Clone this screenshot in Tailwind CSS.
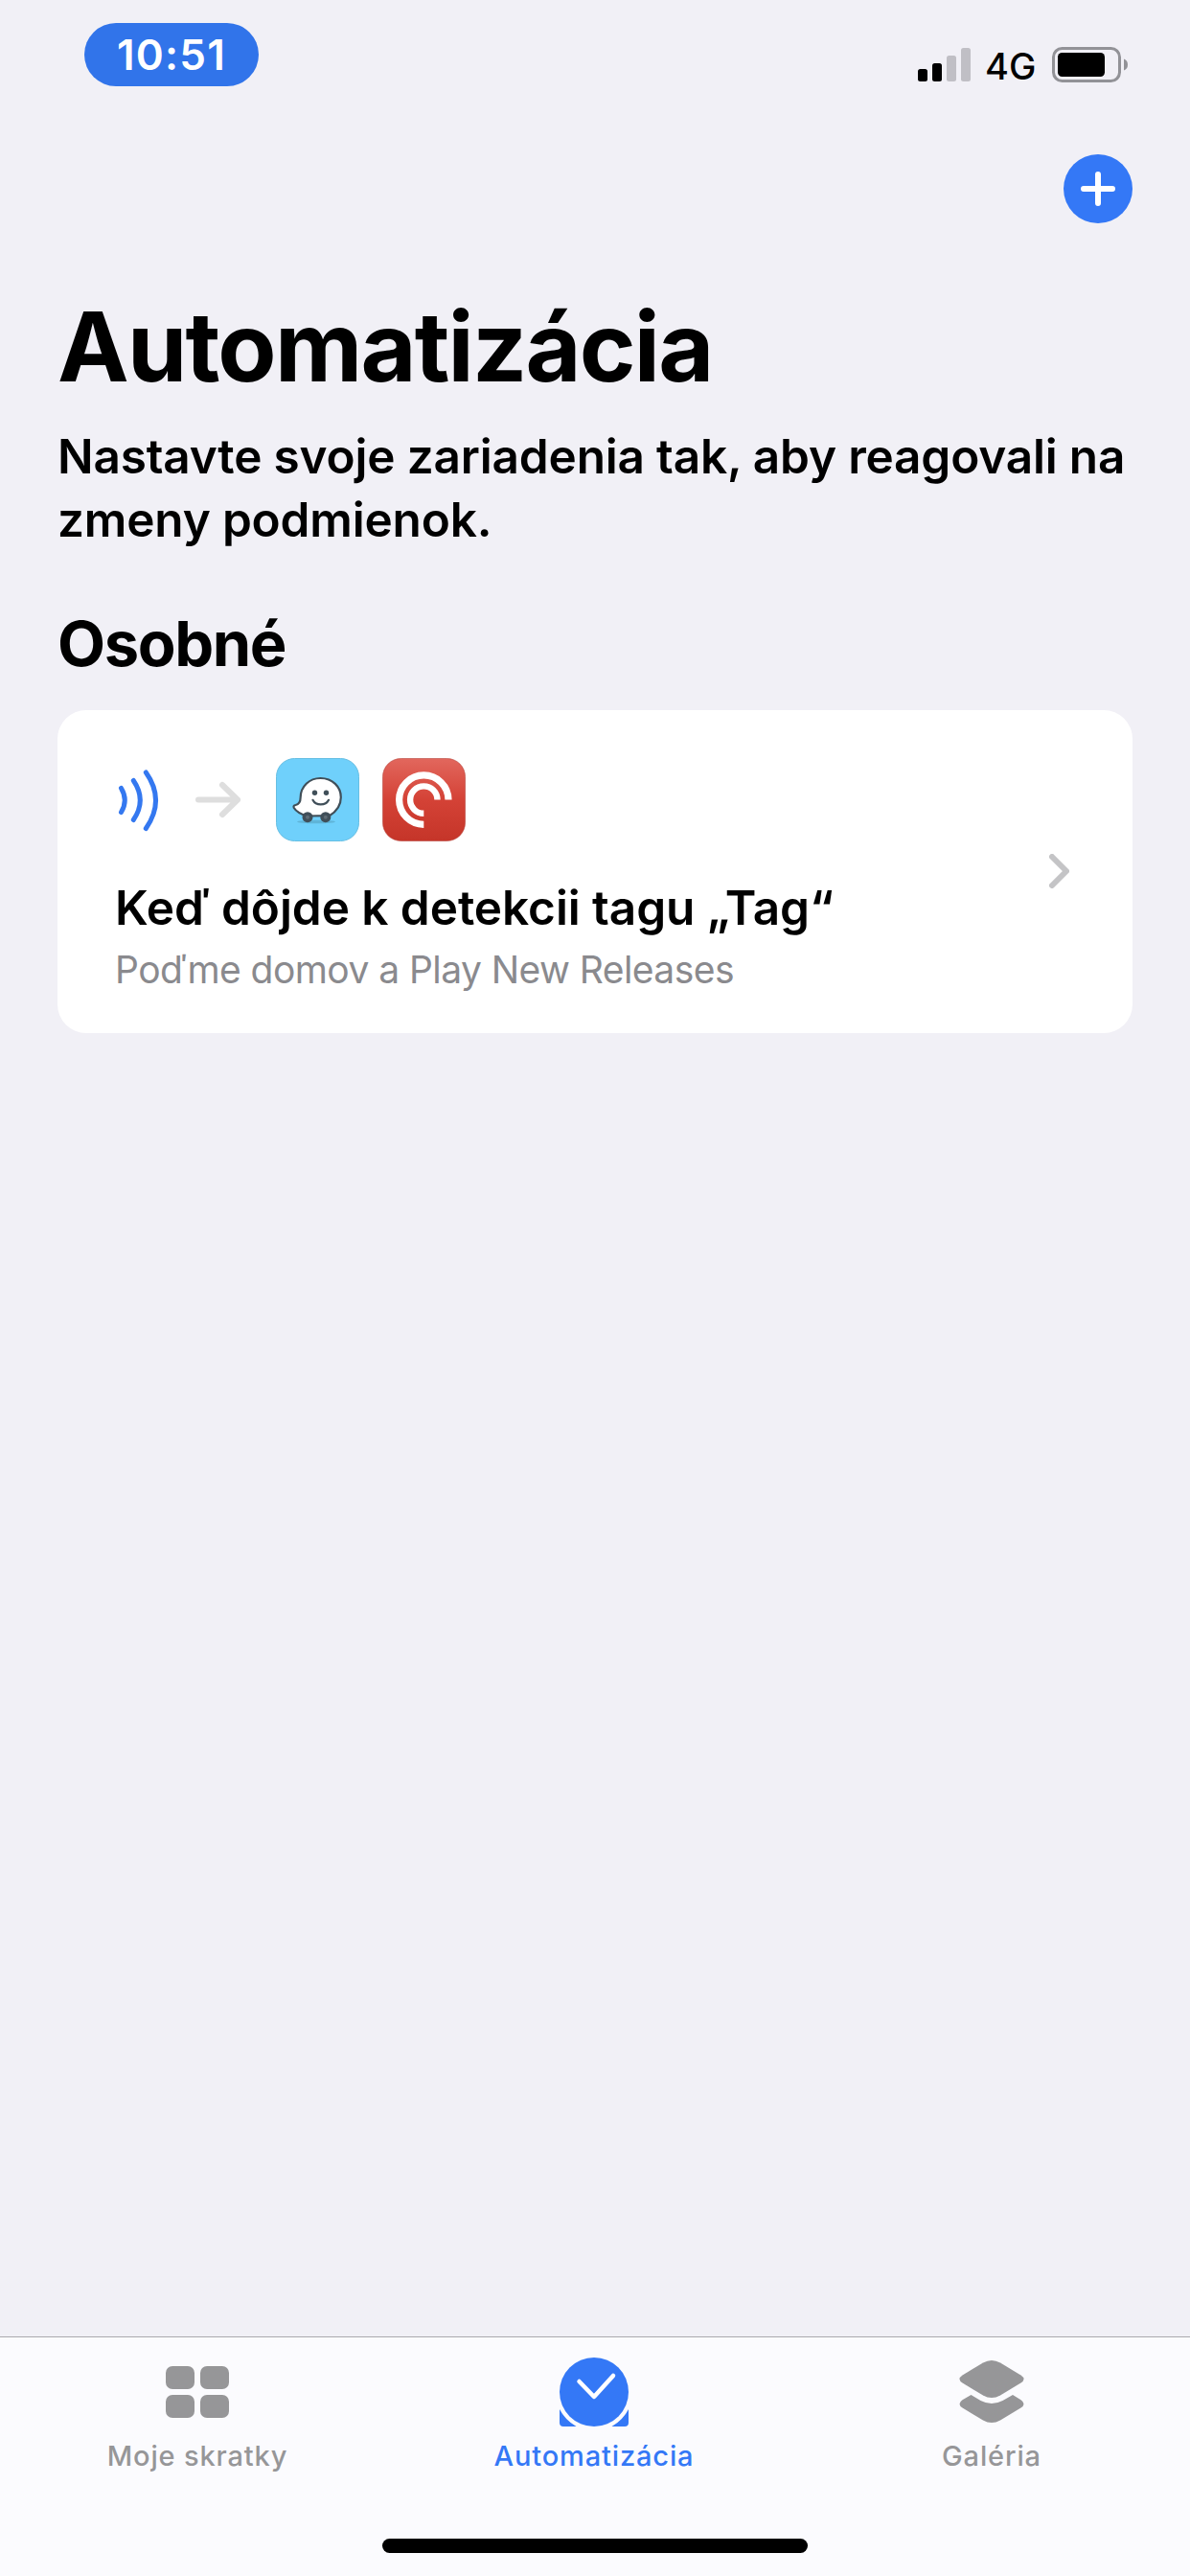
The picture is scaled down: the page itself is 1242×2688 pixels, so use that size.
<!DOCTYPE html>
<html lang="sk">
<head>
    <meta charset="UTF-8">
    <meta name="viewport" content="width=device-width, initial-scale=1.0">
    <title>Automatizácia</title>
    <script src="https://cdn.jsdelivr.net/npm/@tailwindcss/browser@4"></script>
</head>
<body class="bg-[#f1f0f6] text-black font-['Inter','Roboto',sans-serif]">
    <div class="flex flex-col w-[1242px] h-[2688px] overflow-hidden">
        <!-- Status bar -->
        <header class="flex justify-between items-start h-[161px] pl-[88px] pr-[65px] pt-6">
            <div class="flex items-center justify-center w-[182px] h-[66px] rounded-full bg-[#3174ea] text-white text-[44px] font-semibold tracking-[1.2px]">10:51</div>
            <div class="flex items-center h-[38px] mt-[25px]">
                <svg class="w-[55px] h-[38px]" viewBox="0 0 55 38">
                    <rect x="0" y="23" width="10" height="13" rx="2.5" fill="#000"/>
                    <rect x="15" y="17" width="10" height="19" rx="2.5" fill="#000"/>
                    <rect x="30" y="9" width="10" height="27" rx="2.5" fill="#c0bfc5"/>
                    <rect x="45" y="1" width="10" height="35" rx="2.5" fill="#c0bfc5"/>
                </svg>
                <span class="ml-[15px] mt-[2px] w-[52px] text-[38px] leading-[38px] font-medium">4G</span>
                <svg class="ml-[18px] w-[79px] h-[38px]" viewBox="0 0 79 38">
                    <rect x="1.5" y="1.5" width="69" height="34" rx="9" fill="none" stroke="#929297" stroke-width="3"/>
                    <rect x="6" y="6" width="49" height="25" rx="4.5" fill="#000"/>
                    <path d="M75 12.5q4 1.5 4 6t-4 6z" fill="#929297"/>
                </svg>
            </div>
        </header>

        <!-- Content -->
        <main class="flex-1 px-[60px]">
            <div class="flex justify-end">
                <button class="block size-[72px]">
                    <svg class="size-[72px]" viewBox="0 0 72 72">
                        <circle cx="36" cy="36" r="36" fill="#3478f6"/>
                        <path d="M36 21v30M21 36h30" stroke="#fff" stroke-width="6" stroke-linecap="round"/>
                    </svg>
                </button>
            </div>
            <h1 class="mt-[69px] text-[100px] leading-[120px] font-bold tracking-[-1.75px] whitespace-nowrap">Automatizácia</h1>
            <p class="mt-[21px] text-[49.5px] leading-[66px] font-semibold tracking-[-0.17px] whitespace-nowrap">Nastavte svoje zariadenia tak, aby reagovali na<br>zmeny podmienok.</p>
            <h2 class="mt-[57px] text-[65px] leading-[80px] font-bold tracking-[-1.4px]">Osobné</h2>

            <!-- Automation card -->
            <div class="flex items-center justify-between mt-[29px] h-[337px] pl-[60px] pr-[66px] rounded-[30px] bg-white">
                <div class="h-full pt-[50px]">
                    <div class="flex items-center h-[87px]">
                        <svg class="w-[48px] h-[87px]" viewBox="0 0 48 87" fill="none" stroke="#3478f0" stroke-width="5" stroke-linecap="round">
                            <path d="M6.5 31.5q7.5 12.5 0 25"/>
                            <path d="M19.3 23.5q14 20.500 0 41"/>
                            <path d="M32.300 15q20.500 29 0 58.500"/>
                        </svg>
                        <svg class="ml-[34px] w-[52px] h-[87px]" viewBox="0 0 52 87" fill="none" stroke="#dedede" stroke-width="6" stroke-linecap="round" stroke-linejoin="round">
                            <path d="M5 43.500h41M30 28l16 15.500-16 15.500"/>
                        </svg>
                        <!-- Waze -->
                        <svg class="ml-[34px] size-[87px]" viewBox="0 0 87 87">
                            <rect x=".5" y=".5" width="86" height="86" rx="19" fill="#6fd0fb" stroke="#67bfe3"/>
                            <ellipse cx="42" cy="66.500" rx="20" ry="1.800" fill="#5fb4d8"/>
                            <path d="M32 60.500C26 58.500 21 55.500 18.800 52c-.9-1.800.2-2.700 1.700-3C24.500 48 25.600 45 25.600 41.500 25.600 29.500 35 21 46.500 21 59 21 67.800 30 67.800 41c0 8.500-5 15-12 19.200z" fill="#fff" stroke="#404f59" stroke-width="2.200" stroke-linejoin="round"/>
                            <circle cx="33" cy="61.700" r="5.500" fill="#404f59"/>
                            <circle cx="51.800" cy="61.700" r="5.500" fill="#404f59"/>
                            <circle cx="33" cy="61.700" r="2" fill="#5f6c75"/>
                            <circle cx="51.800" cy="61.700" r="2" fill="#5f6c75"/>
                            <circle cx="40.500" cy="36.300" r="2.700" fill="#404f59"/>
                            <circle cx="52.500" cy="36.300" r="2.700" fill="#404f59"/>
                            <path d="M38.500 43.800c3 6.200 13.500 6.200 16.500 0" fill="none" stroke="#404f59" stroke-width="2.200" stroke-linecap="round"/>
                        </svg>
                        <!-- Pocket Casts -->
                        <svg class="ml-[24px] size-[87px]" viewBox="0 0 87 87">
                            <defs>
                                <linearGradient id="pc" x1="0" y1="0" x2="0" y2="1">
                                    <stop offset="0" stop-color="#e2675d"/>
                                    <stop offset=".5" stop-color="#d44236"/>
                                    <stop offset="1" stop-color="#c53529"/>
                                </linearGradient>
                            </defs>
                            <rect x=".5" y=".5" width="86" height="86" rx="19" fill="url(#pc)" stroke="#b8423a" stroke-opacity=".6"/>
                            <path d="M43.300 69.300A25.700 25.700 0 1 1 69 43.600" fill="none" stroke="#fff" stroke-width="7.200"/>
                            <path d="M43.300 57.800A14.200 14.200 0 1 1 57.500 43.600" fill="none" stroke="#fff" stroke-width="6.400"/>
                        </svg>
                    </div>
                    <h3 class="mt-[39px] text-[49.5px] leading-[60px] font-semibold tracking-[-0.05px] whitespace-nowrap">Keď dôjde k detekcii tagu „Tag“</h3>
                    <p class="mt-[11px] text-[39px] leading-[48px] tracking-[-0.56px] text-[#8a8a8e] whitespace-nowrap">Poďme domov a Play New Releases</p>
                </div>
                <svg class="mb-[2px] w-[21px] h-[36px]" viewBox="0 0 21 36" fill="none" stroke="#c4c4c6" stroke-width="6" stroke-linecap="round" stroke-linejoin="round">
                    <path d="M3 3l15 15-15 15"/>
                </svg>
            </div>
        </main>

        <!-- Tab bar -->
        <nav class="h-[250px] border-t border-[#aaaaae] bg-[#fbfbfe] text-[29px] leading-9 font-medium tracking-[0.85px] text-[#969698]">
            <div class="grid grid-cols-3">
                <a class="flex flex-col items-center pt-[21px] pr-[2px]">
                    <svg class="size-[72px]" viewBox="0 0 72 72" fill="#969698">
                        <rect x="3" y="9" width="30" height="24" rx="7"/>
                        <rect x="39" y="9" width="30" height="24" rx="7"/>
                        <rect x="3" y="39" width="30" height="24" rx="7"/>
                        <rect x="39" y="39" width="30" height="24" rx="7"/>
                    </svg>
                    <span class="mt-[13px]">Moje skratky</span>
                </a>
                <a class="flex flex-col items-center pt-[21px] pr-[2px] text-[#3478f6]">
                    <svg class="size-[72px]" viewBox="0 0 72 72">
                        <path d="M0 54Q6 65.500 17.500 72H4Q0 72 0 68zM72 54Q66 65.500 54.500 72H68Q72 72 72 68z" fill="#3478f6"/>
                        <circle cx="36" cy="36" r="36" fill="#3478f6"/>
                        <path d="M20.500 25L36 41 56 19" fill="none" stroke="#fff" stroke-width="4.500" stroke-linecap="round" stroke-linejoin="round"/>
                    </svg>
                    <span class="mt-[13px]">Automatizácia</span>
                </a>
                <a class="flex flex-col items-center pt-[21px]">
                    <svg class="size-[72px]" viewBox="0 0 72 72" fill="#969698">
                        <path d="M27 5.500Q36 .5 45 5.500L66.500 18.500Q72.500 22.500 66.500 26.500L45 39.500Q36 44.500 27 39.500L5.500 26.500Q-.5 22.500 5.500 18.500z"/>
                        <path d="M14.500 39L24.500 45Q36 51 47.500 45L58 39 66.500 44.300Q72.500 48.500 66.500 52.500L45 65.500Q36 70.500 27 65.500L5.500 52.500Q-.5 48.500 5.500 44.300z"/>
                    </svg>
                    <span class="mt-[13px]">Galéria</span>
                </a>
            </div>
            <!-- Home indicator -->
            <div class="mx-auto mt-[68px] w-[444px] h-[15px] rounded-full bg-black"></div>
        </nav>
    </div>
</body>
</html>
